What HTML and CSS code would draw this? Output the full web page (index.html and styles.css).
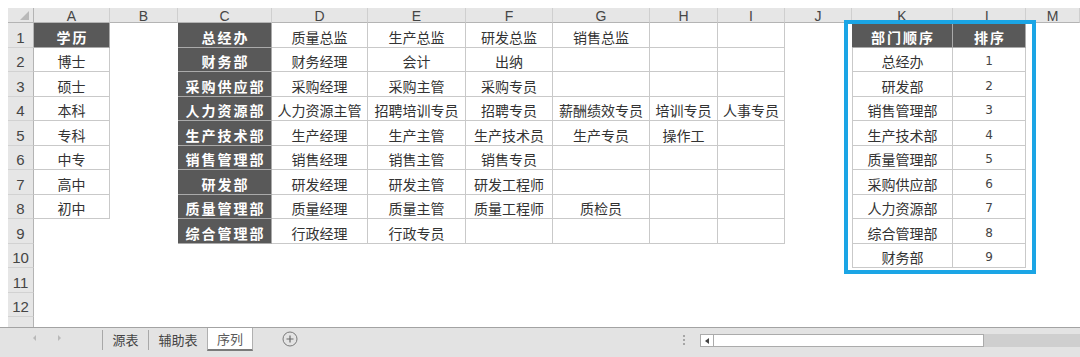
FILE: index.html
```html
<!DOCTYPE html>
<html lang="zh">
<head>
<meta charset="utf-8">
<title>序列</title>
<link rel="stylesheet" href="styles.css">
</head>
<body>
<div class="sheet">
  <div class="grid">
    <div class="ch corner"><span class="tri"></span></div>
    <div class="ch">A</div><div class="ch">B</div><div class="ch">C</div><div class="ch">D</div><div class="ch">E</div><div class="ch">F</div><div class="ch">G</div><div class="ch">H</div><div class="ch">I</div><div class="ch">J</div><div class="ch">K</div><div class="ch">L</div><div class="ch">M</div>

    <div class="rh">1</div>
    <div class="c d">学历</div><div class="c"></div><div class="c d">总经办</div><div class="c b">质量总监</div><div class="c b">生产总监</div><div class="c b">研发总监</div><div class="c b">销售总监</div><div class="c b"></div><div class="c b"></div><div class="c"></div><div class="c d">部门顺序</div><div class="c d">排序</div><div class="c"></div>

    <div class="rh">2</div>
    <div class="c b">博士</div><div class="c"></div><div class="c d">财务部</div><div class="c b">财务经理</div><div class="c b">会计</div><div class="c b">出纳</div><div class="c b"></div><div class="c b"></div><div class="c b"></div><div class="c"></div><div class="c b bl">总经办</div><div class="c b num">1</div><div class="c"></div>

    <div class="rh">3</div>
    <div class="c b">硕士</div><div class="c"></div><div class="c d">采购供应部</div><div class="c b">采购经理</div><div class="c b">采购主管</div><div class="c b">采购专员</div><div class="c b"></div><div class="c b"></div><div class="c b"></div><div class="c"></div><div class="c b bl">研发部</div><div class="c b num">2</div><div class="c"></div>

    <div class="rh">4</div>
    <div class="c b">本科</div><div class="c"></div><div class="c d">人力资源部</div><div class="c b">人力资源主管</div><div class="c b">招聘培训专员</div><div class="c b">招聘专员</div><div class="c b">薪酬绩效专员</div><div class="c b">培训专员</div><div class="c b">人事专员</div><div class="c"></div><div class="c b bl">销售管理部</div><div class="c b num">3</div><div class="c"></div>

    <div class="rh">5</div>
    <div class="c b">专科</div><div class="c"></div><div class="c d">生产技术部</div><div class="c b">生产经理</div><div class="c b">生产主管</div><div class="c b">生产技术员</div><div class="c b">生产专员</div><div class="c b">操作工</div><div class="c b"></div><div class="c"></div><div class="c b bl">生产技术部</div><div class="c b num">4</div><div class="c"></div>

    <div class="rh">6</div>
    <div class="c b">中专</div><div class="c"></div><div class="c d">销售管理部</div><div class="c b">销售经理</div><div class="c b">销售主管</div><div class="c b">销售专员</div><div class="c b"></div><div class="c b"></div><div class="c b"></div><div class="c"></div><div class="c b bl">质量管理部</div><div class="c b num">5</div><div class="c"></div>

    <div class="rh">7</div>
    <div class="c b">高中</div><div class="c"></div><div class="c d">研发部</div><div class="c b">研发经理</div><div class="c b">研发主管</div><div class="c b">研发工程师</div><div class="c b"></div><div class="c b"></div><div class="c b"></div><div class="c"></div><div class="c b bl">采购供应部</div><div class="c b num">6</div><div class="c"></div>

    <div class="rh">8</div>
    <div class="c b">初中</div><div class="c"></div><div class="c d">质量管理部</div><div class="c b">质量经理</div><div class="c b">质量主管</div><div class="c b">质量工程师</div><div class="c b">质检员</div><div class="c b"></div><div class="c b"></div><div class="c"></div><div class="c b bl">人力资源部</div><div class="c b num">7</div><div class="c"></div>

    <div class="rh">9</div>
    <div class="c"></div><div class="c"></div><div class="c d">综合管理部</div><div class="c b">行政经理</div><div class="c b">行政专员</div><div class="c b"></div><div class="c b"></div><div class="c b"></div><div class="c b"></div><div class="c"></div><div class="c b bl">综合管理部</div><div class="c b num">8</div><div class="c"></div>

    <div class="rh">10</div>
    <div class="c"></div><div class="c"></div><div class="c"></div><div class="c"></div><div class="c"></div><div class="c"></div><div class="c"></div><div class="c"></div><div class="c"></div><div class="c"></div><div class="c b bl">财务部</div><div class="c b num">9</div><div class="c"></div>

    <div class="rh">11</div>
    <div class="c"></div><div class="c"></div><div class="c"></div><div class="c"></div><div class="c"></div><div class="c"></div><div class="c"></div><div class="c"></div><div class="c"></div><div class="c"></div><div class="c"></div><div class="c"></div><div class="c"></div>

    <div class="rh">12</div>
    <div class="c"></div><div class="c"></div><div class="c"></div><div class="c"></div><div class="c"></div><div class="c"></div><div class="c"></div><div class="c"></div><div class="c"></div><div class="c"></div><div class="c"></div><div class="c"></div><div class="c"></div>

    <div class="rh last"></div>
  </div>
  <div class="sel"></div>
</div>

<div class="tabbar">
  <div class="nav"><span class="arr left"></span><span class="arr right"></span></div>
  <span class="sep"></span>
  <div class="tab t1">源表</div>
  <span class="sep"></span>
  <div class="tab t2">辅助表</div>
  <div class="tab active">序列</div>
  <svg class="plus" width="16" height="16" viewBox="0 0 16 16"><circle cx="8" cy="8" r="7" fill="none" stroke="#7a7a7a" stroke-width="1"/><path d="M8 4.5v7M4.5 8h7" stroke="#6a6a6a" stroke-width="1.2"/></svg>
  <div class="spacer"></div>
  <div class="dots"><i></i><i></i><i></i></div>
  <div class="scroll">
    <div class="sbtn"><span class="sarr"></span></div>
    <div class="track"></div>
    <div class="rest"></div>
  </div>
</div>
</body>
</html>
```
FILE: styles.css
```css
* { box-sizing: border-box; }

html, body {
  margin: 0;
  padding: 0;
  background: #ffffff;
}

body {
  width: 1080px;
  height: 357px;
  overflow: hidden;
  font-family: "Noto Sans CJK SC", "Liberation Sans", sans-serif;
}

.sheet {
  position: relative;
  margin: 8px 0 0 8px;
  height: 319px;
  overflow: hidden;
}

.grid {
  display: grid;
  grid-template-columns: 26px 76px 68px 94px 96px 98px 87px 97px 68px 67px 67px 101px 73px 54px;
  grid-template-rows: 15px repeat(6, 25px 24px) 10px;
}

.ch {
  background: #e6e6e6;
  border-right: 1px solid #cfcfcf;
  border-bottom: 1px solid #b4b4b4;
  font-family: "Liberation Sans", sans-serif;
  font-size: 14px;
  line-height: 1;
  color: #454545;
  display: flex;
  align-items: center;
  justify-content: center;
  padding-top: 2px;
}

.corner {
  position: relative;
  border-right-color: #b4b4b4;
}

.tri {
  position: absolute;
  right: 4px;
  bottom: 2px;
  width: 0;
  height: 0;
  border-left: 9px solid transparent;
  border-bottom: 9px solid #b9b9b9;
}

.rh {
  background: #e6e6e6;
  border-right: 1px solid #b4b4b4;
  border-bottom: 1px solid #d2d2d2;
  font-family: "Liberation Sans", sans-serif;
  font-size: 15px;
  line-height: 1;
  color: #454545;
  display: flex;
  align-items: flex-end;
  justify-content: center;
  padding-bottom: 2px;
}

.rh.last { border-bottom: none; }

.c {
  display: flex;
  align-items: center;
  justify-content: center;
  font-size: 14px;
  line-height: 1;
  color: #333333;
  white-space: nowrap;
  padding-top: 3px;
}

.b {
  border-right: 1px solid #c9c9c9;
  border-bottom: 1px solid #c9c9c9;
}

.bl { border-left: 1px solid #c9c9c9; }

.d {
  background: #595959;
  color: #ffffff;
  font-weight: bold;
  letter-spacing: 2px;
  padding-left: 2px;
  border-right: 1px solid #aaaaaa;
  border-bottom: 1px solid #aaaaaa;
}

.num {
  font-family: "DejaVu Sans", sans-serif;
  font-size: 12px;
  color: #444444;
}

.sel {
  position: absolute;
  left: 836px;
  top: 12px;
  width: 192px;
  height: 254px;
  border: 4px solid #1ba5e5;
  pointer-events: none;
}

/* sheet tab bar */
.tabbar {
  height: 30px;
  background: #e3e3e3;
  border-top: 1px solid #a3a3a3;
  display: flex;
  align-items: flex-start;
  font-size: 13px;
  color: #444444;
}

.nav {
  width: 102px;
  display: flex;
  align-items: center;
  height: 20px;
  padding-left: 33px;
  gap: 22px;
}

.arr {
  width: 0;
  height: 0;
  border-top: 3px solid transparent;
  border-bottom: 3px solid transparent;
}

.arr.left { border-right: 3px solid #b9b9b9; }
.arr.right { border-left: 3px solid #b9b9b9; }

.sep {
  width: 1px;
  height: 20px;
  margin-top: 2px;
  background: #a8a8a8;
}

.tab {
  height: 23px;
  display: flex;
  align-items: center;
  justify-content: center;
  line-height: 1;
  white-space: nowrap;
}

.t1 { width: 45px; }
.t2 { width: 58px; }

.active {
  width: 46px;
  background: #ffffff;
  color: #5a5a5a;
  border-left: 1px solid #b0b0b0;
  border-right: 1px solid #b0b0b0;
  border-bottom: 2px solid #7a7a7a;
}

.plus {
  margin-top: 3px;
  margin-left: 29px;
}

.spacer { flex: 1; }

.dots {
  width: 3px;
  margin-top: 7px;
  display: flex;
  flex-direction: column;
  gap: 2px;
}

.dots i {
  display: block;
  width: 2px;
  height: 2px;
  background: #a6a6a6;
}

.scroll {
  display: flex;
  margin-top: 6px;
  margin-left: 14px;
  height: 13px;
}

.sbtn {
  width: 14px;
  background: #ffffff;
  border: 1px solid #ababab;
  display: flex;
  align-items: center;
  justify-content: center;
}

.sarr {
  width: 0;
  height: 0;
  border-top: 3px solid transparent;
  border-bottom: 3px solid transparent;
  border-right: 4px solid #444444;
}

.track {
  width: 270px;
  background: #ffffff;
  border: 1px solid #ababab;
  border-left: none;
}

.rest {
  width: 96px;
  background: #cfcfcf;
}
```
